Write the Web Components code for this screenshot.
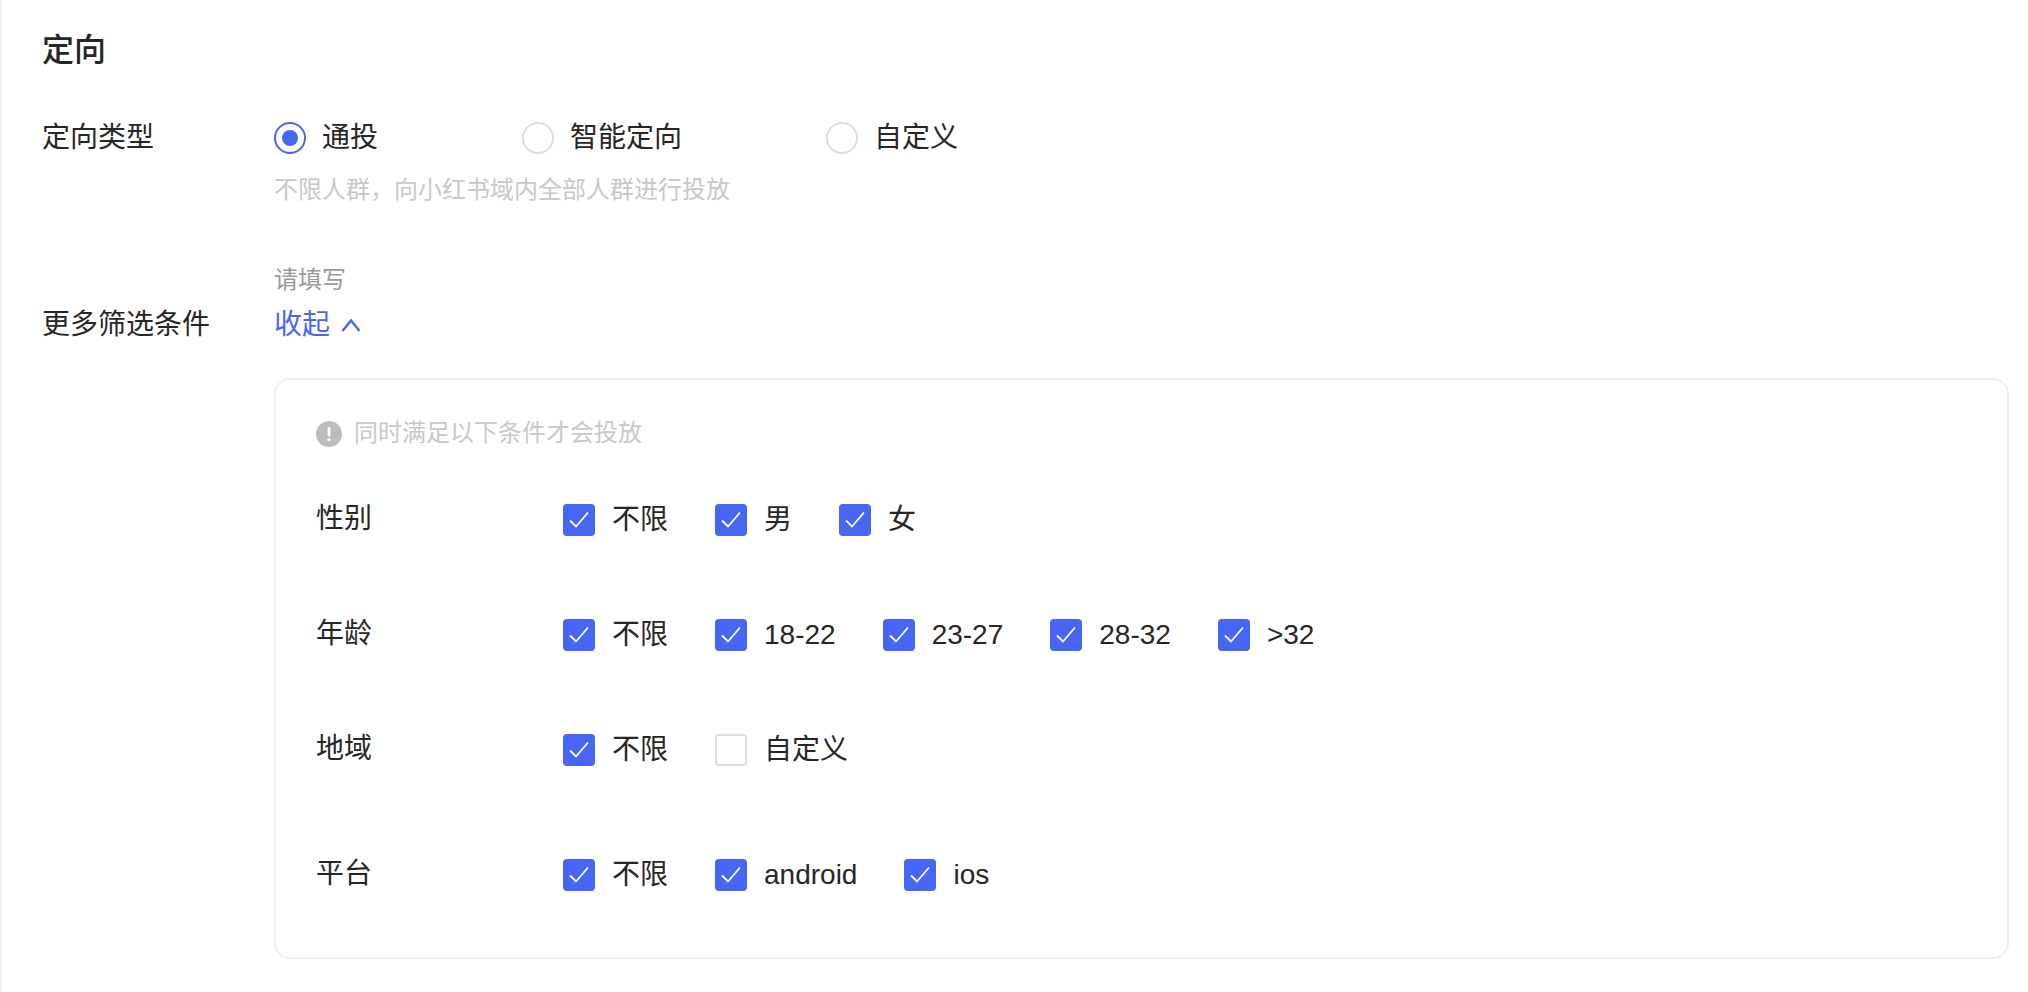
<!DOCTYPE html>
<html lang="zh-CN">
<head>
<meta charset="utf-8">
<title>定向</title>
<style>
    html, body {
        margin: 0;
        background: #fff;
        color: #262626;
        font-family: "Liberation Sans", "Noto Sans CJK SC", sans-serif;
        font-size: 28px;
    }
</style>
</head>
<body>
<targeting-page>
    <span slot="title">定向</span>

    <form-field label="定向类型" first>
        <radio-group>
            <radio-item checked>通投</radio-item>
            <radio-item>智能定向</radio-item>
            <radio-item>自定义</radio-item>
        </radio-group>
        <div slot="hint">不限人群，向小红书域内全部人群进行投放</div>
    </form-field>

    <form-field label="更多筛选条件">
        <div slot="placeholder">请填写</div>
        <collapse-link>收起</collapse-link>
    </form-field>

    <filter-box>
        <span slot="note">同时满足以下条件才会投放</span>
        <filter-row label="性别">
            <check-item checked>不限</check-item>
            <check-item checked>男</check-item>
            <check-item checked>女</check-item>
        </filter-row>
        <filter-row label="年龄">
            <check-item checked>不限</check-item>
            <check-item checked>18-22</check-item>
            <check-item checked>23-27</check-item>
            <check-item checked>28-32</check-item>
            <check-item checked>&gt;32</check-item>
        </filter-row>
        <filter-row label="地域" style="--row-bottom: 93px">
            <check-item checked>不限</check-item>
            <check-item>自定义</check-item>
        </filter-row>
        <filter-row label="平台">
            <check-item checked>不限</check-item>
            <check-item checked>android</check-item>
            <check-item checked>ios</check-item>
        </filter-row>
    </filter-box>
</targeting-page>

<script>
const BLUE = '#4766f5'

class TargetingPage extends HTMLElement {
    constructor() {
        super()
        this.attachShadow({ mode: 'open' }).innerHTML = `
            <style>
                :host {
                    display: block;
                    min-height: 992px;
                    box-sizing: border-box;
                    border-left: 2px solid #f2f2f2;
                    padding: 30px 19px 0 40px;
                }
                #title {
                    font-size: 32px;
                    font-weight: 500;
                    line-height: 40px;
                    margin-bottom: 52px;
                }
            </style>
            <div id="title"><slot name="title"></slot></div>
            <slot></slot>
        `
    }
}

class FormField extends HTMLElement {
    constructor() {
        super()
        this.attachShadow({ mode: 'open' }).innerHTML = `
            <style>
                :host {
                    display: block;
                }
                #hint, #placeholder {
                    font-size: 24px;
                    line-height: 34px;
                    margin-left: 232px;
                }
                #hint {
                    color: #c8c8c8;
                    margin-top: 19px;
                }
                #placeholder {
                    color: #999;
                    margin-top: 56px;
                    margin-bottom: 13px;
                }
                #row {
                    display: flex;
                    align-items: flex-start;
                }
                #label {
                    flex: 0 0 232px;
                    line-height: 30px;
                }
                :host([first]) #label { line-height: 32px; }
                #content { flex: 1; }
            </style>
            <div id="placeholder"><slot name="placeholder"></slot></div>
            <div id="row">
                <div id="label"></div>
                <div id="content"><slot></slot></div>
            </div>
            <div id="hint"><slot name="hint"></slot></div>
        `
    }

    connectedCallback() {
        const root = this.shadowRoot
        root.getElementById('label').textContent = this.getAttribute('label')
        if (this.hasAttribute('first')) root.getElementById('placeholder').remove()
        else root.getElementById('hint').remove()
    }
}

class RadioGroup extends HTMLElement {
    constructor() {
        super()
        this.attachShadow({ mode: 'open' }).innerHTML = `
            <style>
                :host {
                    display: flex;
                    gap: 144px;
                }
            </style>
            <slot></slot>
        `
    }
}

class RadioItem extends HTMLElement {
    constructor() {
        super()
        this.attachShadow({ mode: 'open' }).innerHTML = `
            <style>
                :host {
                    display: inline-flex;
                    align-items: center;
                    gap: 16px;
                    height: 32px;
                    line-height: 32px;
                }
                #dot {
                    width: 32px;
                    height: 32px;
                    box-sizing: border-box;
                    border-radius: 50%;
                    border: 2px solid #ddd;
                    display: flex;
                    align-items: center;
                    justify-content: center;
                }
                :host([checked]) #dot { border-color: ${BLUE}; }
                :host([checked]) #dot::after {
                    content: "";
                    width: 16px;
                    height: 16px;
                    border-radius: 50%;
                    background: ${BLUE};
                }
            </style>
            <span id="dot"></span>
            <slot></slot>
        `
    }
}

class CollapseLink extends HTMLElement {
    constructor() {
        super()
        this.attachShadow({ mode: 'open' }).innerHTML = `
            <style>
                :host {
                    display: flex;
                    align-items: center;
                    gap: 11px;
                    height: 30px;
                    line-height: 30px;
                    color: ${BLUE};
                    cursor: pointer;
                }
                svg { display: block; }
            </style>
            <slot></slot>
            <svg width="20" height="16" viewBox="0 0 20 16" fill="none">
                <polyline points="1.5,14 10,3.5 18.5,14" stroke="${BLUE}" stroke-width="2.4"/>
            </svg>
        `
    }
}

class FilterBox extends HTMLElement {
    constructor() {
        super()
        this.attachShadow({ mode: 'open' }).innerHTML = `
            <style>
                :host {
                    display: block;
                    box-sizing: border-box;
                    height: 581px;
                    margin: 38px 0 0 232px;
                    padding: 37px 40px 0;
                    border: 2px solid #f0f0f0;
                    border-radius: 16px;
                }
                #note {
                    display: flex;
                    align-items: flex-start;
                    gap: 12px;
                    height: 34px;
                    line-height: 31px;
                    font-size: 24px;
                    color: #c8c8c8;
                    margin-bottom: 53px;
                }
                svg {
                    display: block;
                    margin-top: 4px;
                }
            </style>
            <div id="note">
                <svg width="26" height="26" viewBox="0 0 26 26">
                    <circle cx="13" cy="13" r="13" fill="#bdbdbd"/>
                    <rect x="11.6" y="6" width="2.8" height="9.5" rx="1.2" fill="#fff"/>
                    <circle cx="13" cy="18.6" r="1.7" fill="#fff"/>
                </svg>
                <slot name="note"></slot>
            </div>
            <slot></slot>
        `
    }
}

class FilterRow extends HTMLElement {
    constructor() {
        super()
        this.attachShadow({ mode: 'open' }).innerHTML = `
            <style>
                :host {
                    display: flex;
                    align-items: flex-start;
                    height: 32px;
                    margin-bottom: var(--row-bottom, 83px);
                }
                #label {
                    flex: 0 0 247px;
                    line-height: 30px;
                }
                #items {
                    display: flex;
                    gap: 47px;
                }
            </style>
            <div id="label"></div>
            <div id="items"><slot></slot></div>
        `
    }

    connectedCallback() {
        this.shadowRoot.getElementById('label').textContent = this.getAttribute('label')
    }
}

class CheckItem extends HTMLElement {
    constructor() {
        super()
        this.attachShadow({ mode: 'open' }).innerHTML = `
            <style>
                :host {
                    display: inline-flex;
                    align-items: center;
                    gap: 17px;
                    height: 32px;
                    line-height: 32px;
                    white-space: nowrap;
                }
                #box {
                    width: 32px;
                    height: 32px;
                    box-sizing: border-box;
                    border-radius: 4px;
                    border: 2px solid #ddd;
                    background: #fff;
                }
                svg { display: none; }
                :host([checked]) #box {
                    border: 0;
                    background: ${BLUE};
                }
                :host([checked]) svg { display: block; }
            </style>
            <span id="box">
                <svg width="32" height="32" viewBox="0 0 32 32" fill="none">
                    <polyline points="7,16.5 13,22.5 25,8.5" stroke="#fff" stroke-width="1.8"/>
                </svg>
            </span>
            <slot></slot>
        `
    }
}

customElements.define('targeting-page', TargetingPage)
customElements.define('form-field', FormField)
customElements.define('radio-group', RadioGroup)
customElements.define('radio-item', RadioItem)
customElements.define('collapse-link', CollapseLink)
customElements.define('filter-box', FilterBox)
customElements.define('filter-row', FilterRow)
customElements.define('check-item', CheckItem)
</script>
</body>
</html>
